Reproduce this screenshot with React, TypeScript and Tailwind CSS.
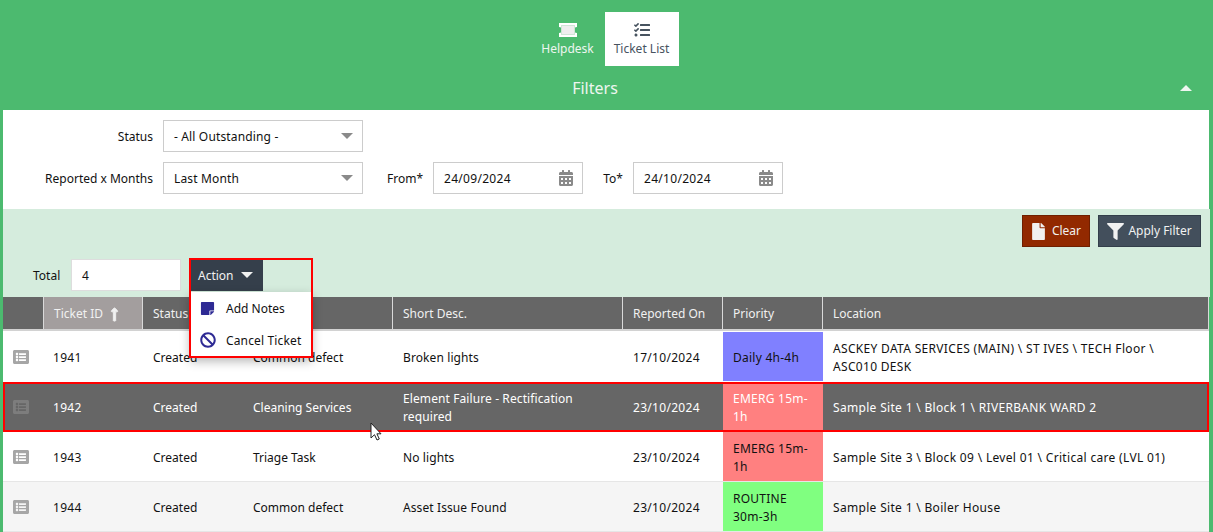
import React from "react";
import { FaBan, FaCalendarAlt, FaFile, FaFilter, FaListAlt, FaLongArrowAltUp, FaStickyNote, FaTasks } from "react-icons/fa";

const cols = "grid grid-cols-[40px_100px_100px_150px_230px_100px_100px_1fr]";

const tickets = [
    { id: "1941", status: "Created", type: "Common defect", desc: "Broken lights", date: "17/10/2024", priority: "Daily 4h-4h", color: "bg-[#8080ff]", location: "ASCKEY DATA SERVICES (MAIN) \\ ST IVES \\ TECH Floor \\ ASC010 DESK", icon: "text-[#a6a6a6]", rowClass: "h-[51px] bg-white pt-[1px] pb-[1px]" },
    { id: "1942", status: "Created", type: "Cleaning Services", desc: "Element Failure - Rectification required", date: "23/10/2024", priority: "EMERG 15m-1h", color: "bg-[#ff8080]", location: "Sample Site 1 \\ Block 1 \\ RIVERBANK WARD 2", icon: "text-[#7d7d7d]", rowClass: "h-[50px] bg-[#666666] text-white outline-2 -outline-offset-2 outline-[#ff0000]" },
    { id: "1943", status: "Created", type: "Triage Task", desc: "No lights", date: "23/10/2024", priority: "EMERG 15m-1h", color: "bg-[#ff8080]", location: "Sample Site 3 \\ Block 09 \\ Level 01 \\ Critical care (LVL 01)", icon: "text-[#a6a6a6]", rowClass: "h-[50px] bg-white border-b border-[#e6e6e6]" },
    { id: "1944", status: "Created", type: "Common defect", desc: "Asset Issue Found", date: "23/10/2024", priority: "ROUTINE 30m-3h", color: "bg-[#80ff80]", location: "Sample Site 1 \\ Boiler House", icon: "text-[#a6a6a6]", rowClass: "h-[50px] bg-[#f5f5f5] border-b border-[#e6e6e6]" },
];

const headers = ["Status", "Type", "Short Desc.", "Reported On", "Priority", "Location"];

function SelectBox({ label, width }: { label: string; width: string }) {
    return (
        <div className={`${width} h-8 border border-[#cccccc] bg-white flex items-center justify-between pl-[10px] pr-[7px]`}>
            <span className="pt-[2px] tracking-[0.15px]">{label}</span>
            <span className="w-0 h-0 border-x-[6px] border-x-transparent border-t-[6px] border-t-[#8a8a8a] mr-[2px]" />
        </div>
    );
}

function DateBox({ value }: { value: string }) {
    return (
        <div className="w-[150px] h-8 border border-[#cccccc] bg-white flex items-center justify-between pl-[10px] pr-[8px]">
            <span className="pt-[2px] tracking-[0.3px]">{value}</span>
            <FaCalendarAlt className="text-[#8a8a8a] text-[16px]" />
        </div>
    );
}

export default function App() {
    return (
        <div className="relative w-[1213px] h-[532px] overflow-hidden bg-[#4cba6f] font-['Noto_Sans',sans-serif] text-[12px] leading-[18px] text-[#111111]">
            {/* Top tabs */}
            <div className="flex justify-center gap-[1px] pt-3 pr-[3px] h-[66px]">
                <div className="w-[72px] h-[54px] flex flex-col items-center text-[#eef6f0]">
                    <svg viewBox="0 0 20 14" className="w-5 h-[14px] mt-[11px] mb-[3px]">
                        <path d="M1 0h18v4a3 3 0 0 0 0 6v4H1v-4a3 3 0 0 0 0-6z" fill="#ffffff" />
                        <rect x="3.5" y="2.5" width="13" height="9" fill="#eeeeee" stroke="#cfe6d6" />
                    </svg>
                    <span>Helpdesk</span>
                </div>
                <div className="w-[74px] h-[54px] bg-white flex flex-col items-center text-[#47535f]">
                    <FaTasks className="text-[16px] mt-[10px] mb-[2px] text-[#47535f]" />
                    <span>Ticket List</span>
                </div>
            </div>

            {/* Filters title */}
            <div className="relative h-[44px] flex items-center justify-center pr-[23px] text-[16px] text-[#eef6f0]">
                Filters
                <span className="absolute right-[21px] top-[19px] w-0 h-0 border-x-[6px] border-x-transparent border-b-[6px] border-b-[#eef6f0]" />
            </div>

            {/* Filter form */}
            <div className="mx-[3px] w-[1206px] h-[99px] bg-white pt-[10px] flex flex-col gap-[10px]">
                <div className="flex items-center">
                    <span className="w-[150px] pt-[2px] text-right">Status</span>
                    <div className="ml-[10px]">
                        <SelectBox label="- All Outstanding -" width="w-[200px]" />
                    </div>
                </div>
                <div className="flex items-center">
                    <span className="w-[150px] pt-[2px] text-right">Reported x Months</span>
                    <div className="ml-[10px]">
                        <SelectBox label="Last Month" width="w-[200px]" />
                    </div>
                    <span className="w-[60px] pt-[2px] text-right">From*</span>
                    <div className="ml-[10px]">
                        <DateBox value="24/09/2024" />
                    </div>
                    <span className="w-[40px] pt-[2px] text-right">To*</span>
                    <div className="ml-[10px]">
                        <DateBox value="24/10/2024" />
                    </div>
                </div>
            </div>

            {/* Actions band */}
            <div className="ml-[3px] w-[1207px] h-[88px] bg-[#d5ecdd] relative">
                <div className="flex justify-end gap-2 pt-[6px] pr-[9px]">
                    <div className="h-8 w-[68px] border border-[#6f1f00] bg-[#922900] text-[#f1f1f1] flex items-center justify-center gap-[5px] pr-[1px]">
                        <FaFile className="text-[17px]" />
                        Clear
                    </div>
                    <div className="h-8 w-[103px] border border-[#333e4a] bg-[#434f5c] text-[#f1f1f1] flex items-center justify-center gap-[4px]">
                        <FaFilter className="text-[17px]" />
                        Apply Filter
                    </div>
                </div>
                <div className="flex items-center pt-[12px] pl-[30px]">
                    <span className="w-[28px] pt-[2px]">Total</span>
                    <div className="ml-[10px] w-[110px] h-8 border border-[#dddddd] bg-white flex items-center pl-[10px] pt-[2px]">4</div>
                    <div className="ml-[9px] w-[73px] h-[32px] bg-[#353f4b] text-[#f1f1f1] flex items-center pl-[8px] gap-[7px]">
                        <span className="pt-[2px]">Action</span>
                        <span className="w-0 h-0 border-x-[6px] border-x-transparent border-t-[6px] border-t-[#f1f1f1]" />
                    </div>
                </div>
            </div>

            {/* Ticket table */}
            <div className="ml-[3px] w-[1206px]">
                <div className={`${cols} h-[34px] bg-[#666666] text-[#f1f1f1] border-b-[2px] border-[#d2d2d2]`}>
                    <div />
                    <div className="bg-[#a39e9e] border-x border-[#d9d9d9] pl-[10px] pt-[2px] flex items-center gap-1">
                        Ticket ID <FaLongArrowAltUp className="text-[15px] stroke-[30]" />
                    </div>
                    {headers.map((h) => (
                        <div key={h} className="border-r border-[#d9d9d9] pl-[10px] pt-[2px] flex items-center">{h}</div>
                    ))}
                </div>
                {tickets.map((t) => (
                    <div key={t.id} className={`${cols} ${t.rowClass} items-stretch`}>
                        <div className="flex items-center pl-[10px]">
                            <FaListAlt className={`text-[16px] ${t.icon}`} />
                        </div>
                        <div className="flex items-center pl-[10px] pt-[2px] tracking-[0.3px]">{t.id}</div>
                        <div className="flex items-center pl-[10px] pt-[2px]">{t.status}</div>
                        <div className="flex items-center pl-[10px] pt-[2px]">{t.type}</div>
                        <div className="flex items-center pl-[10px] pr-[20px] pt-[2px] tracking-[0.1px]">{t.desc}</div>
                        <div className="flex items-center pl-[10px] pt-[2px] tracking-[0.3px]">{t.date}</div>
                        <div className={`${t.color} flex items-center pl-[10px] pr-[10px] pt-[2px] tracking-[0.25px]`}>{t.priority}</div>
                        <div className="flex items-center pl-[10px] pr-[30px] pt-[2px] tracking-[0.32px]">{t.location}</div>
                    </div>
                ))}
            </div>

            {/* Open action menu */}
            <div className="absolute left-[190px] top-[292px] w-[122px] h-[65px] bg-white shadow-[0_4px_10px_rgba(0,0,0,0.3)] flex flex-col">
                <div className="h-[32px] flex items-center pl-[10px] gap-[11px]">
                    <FaStickyNote className="text-[15px] text-[#2e2a94]" />
                    <span className="pt-[2px]">Add Notes</span>
                </div>
                <div className="h-[32px] flex items-center pl-[10px] gap-[10px]">
                    <FaBan className="text-[16px] text-[#2e2a94]" />
                    <span className="pt-[2px] tracking-[0.15px]">Cancel Ticket</span>
                </div>
            </div>

            {/* Red highlight around the action control */}
            <div className="absolute left-[189px] top-[258px] w-[124px] h-[100px] border-2 border-[#ff0000] pointer-events-none" />

            {/* Mouse cursor */}
            <svg viewBox="0 0 12 20" className="absolute left-[370px] top-[422px] w-3 h-5">
                <path d="M1 1v15l3.5-3.3L7 18l2.3-1-2.4-5.2H11z" fill="#ffffff" stroke="#222222" strokeWidth="1" />
            </svg>
        </div>
    );
}
